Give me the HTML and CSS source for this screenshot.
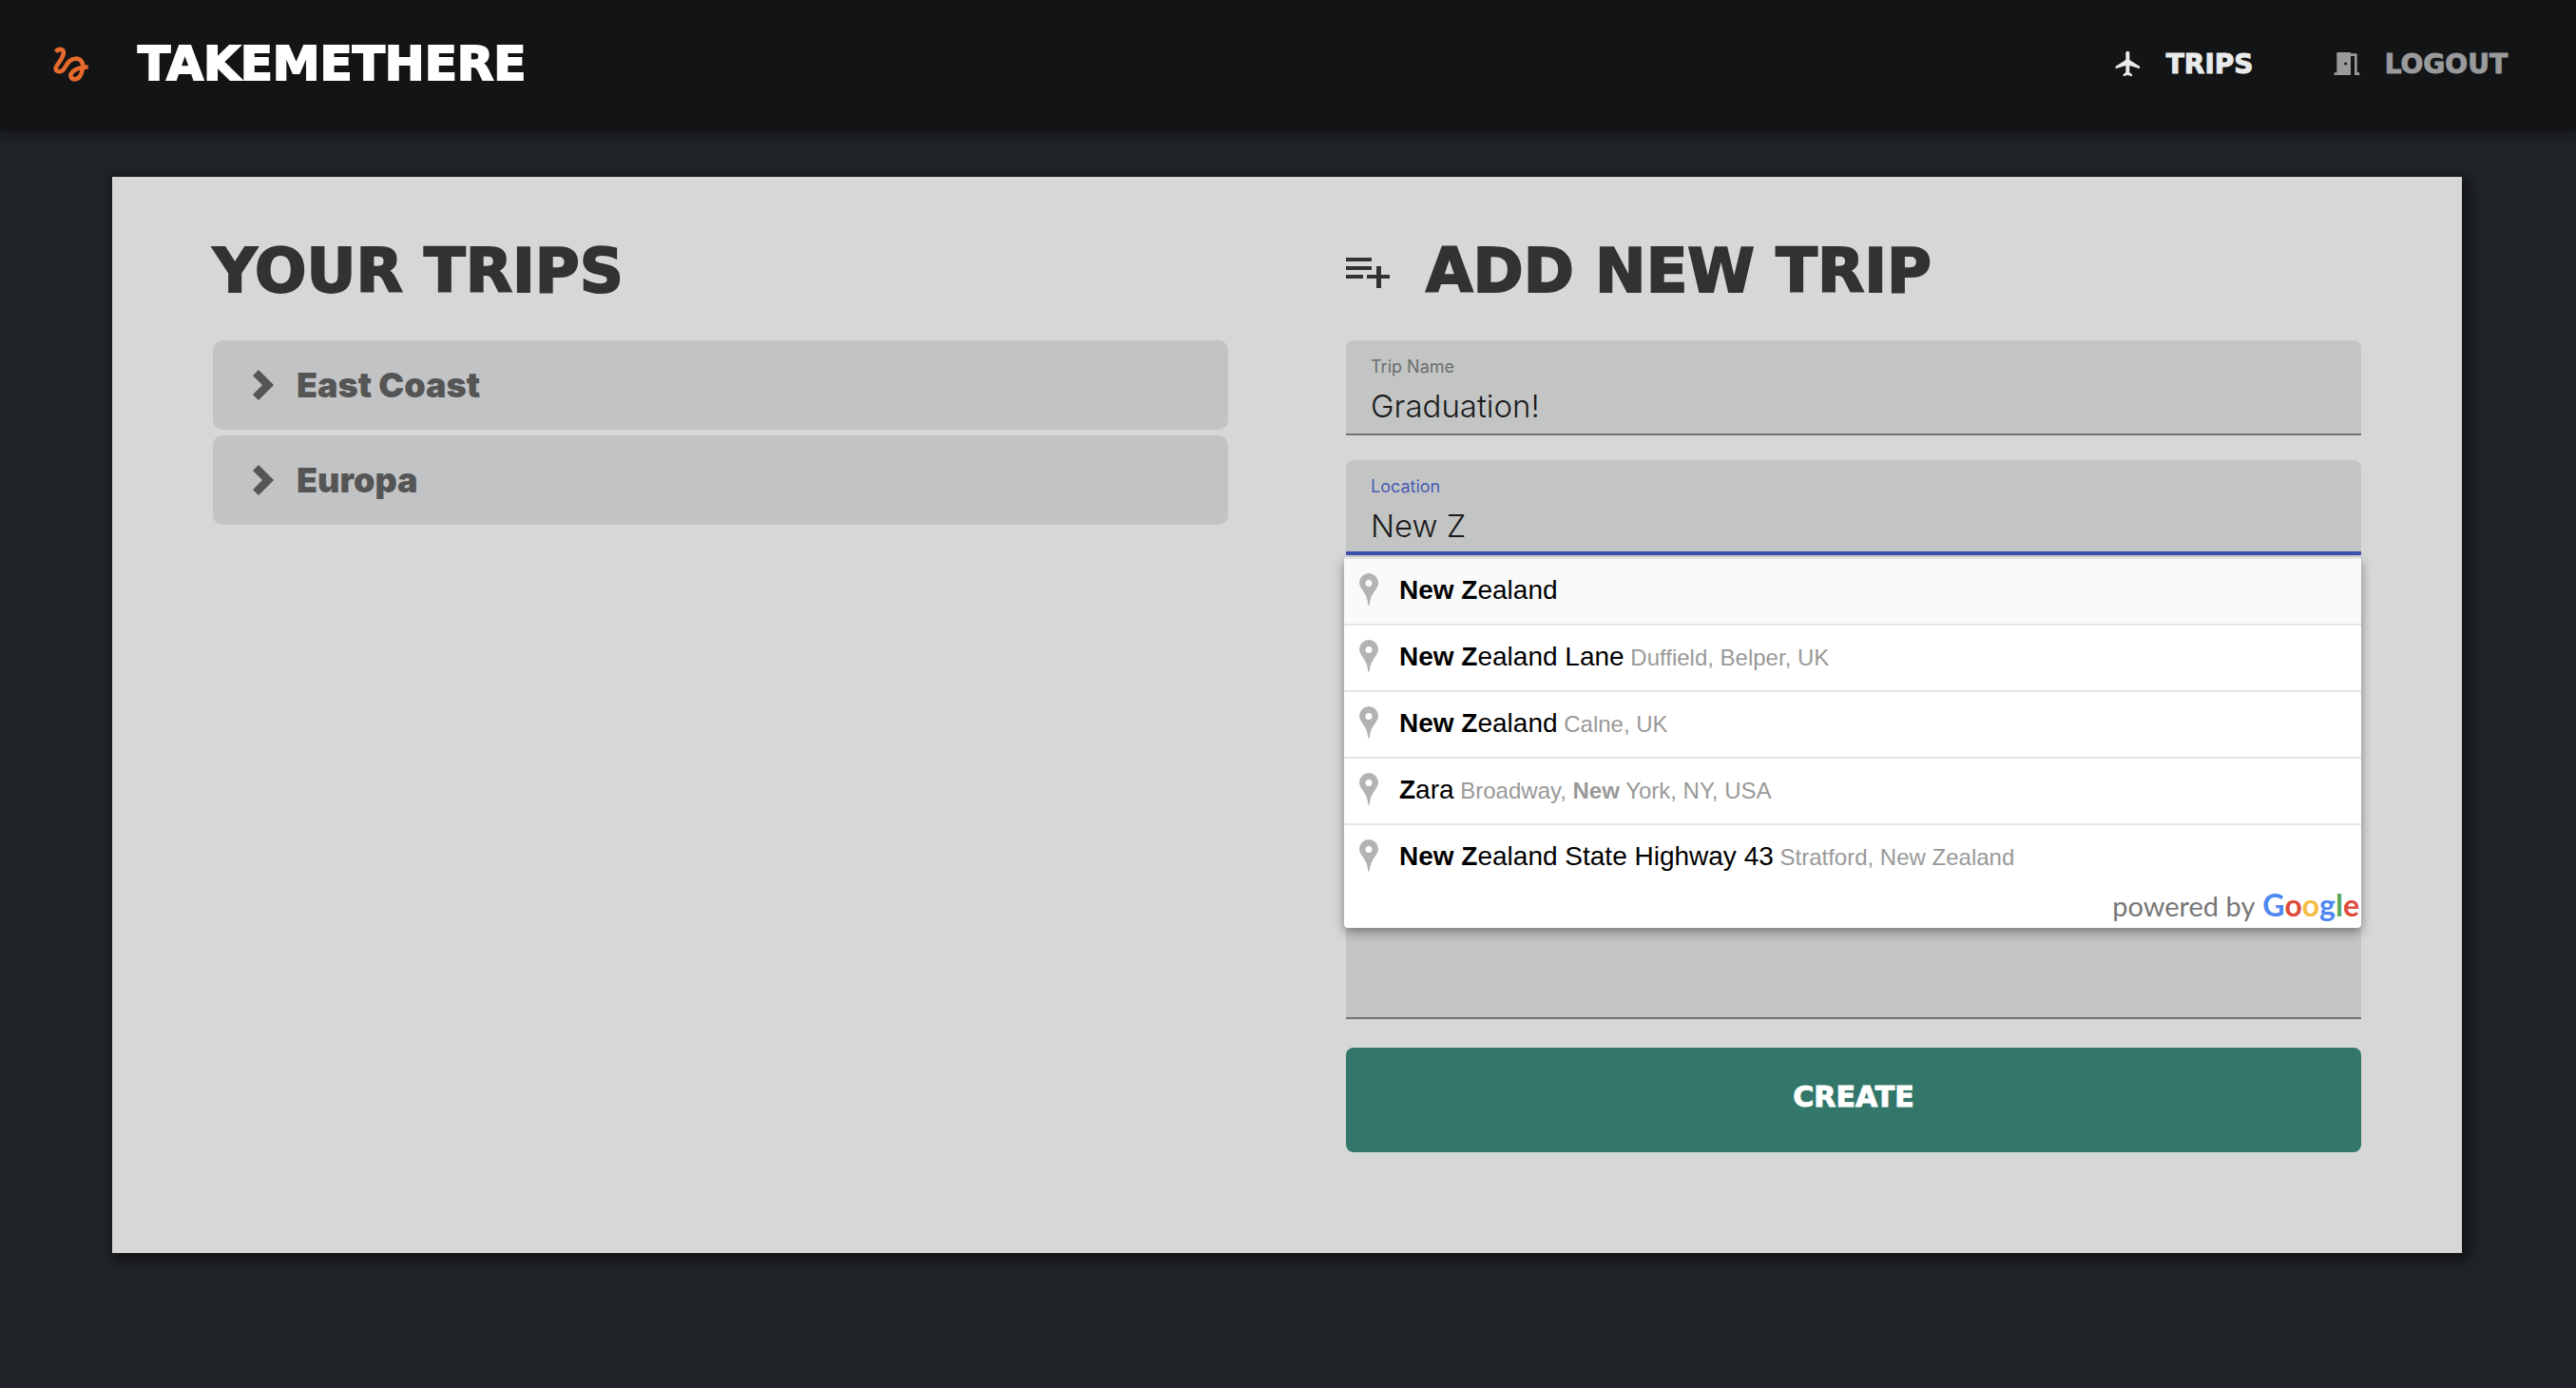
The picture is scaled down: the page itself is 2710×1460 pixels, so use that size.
FILE: index.html
```html
<!DOCTYPE html>
<html lang="en">
<head>
<meta charset="utf-8">
<title>TakeMeThere</title>
<link rel="stylesheet" href="styles.css">
</head>
<body>
<header class="topbar">
  <a class="brand" href="#">
    <svg class="brand-icon" viewBox="30 28 112 112" aria-hidden="true"><path d="M38 45C48 32 66 34 62 54C54 78 38 86 38 98C40 110 54 110 62 102C74 86 78 68 104 66C124 68 128 90 122 105C118 126 108 132 98 132C84 130 82 118 92 108C104 96 120 93 141 93" fill="none" stroke="#e66a2c" stroke-width="14"/></svg>
    <span>TAKEMETHERE</span>
  </a>
  <nav class="nav">
    <a class="nav-link is-active" href="#">
      <svg class="nav-icon" viewBox="0 0 24 24" aria-hidden="true"><path fill="currentColor" d="M21 16v-2l-8-5V3.500C13 2.670 12.330 2 11.500 2S10 2.670 10 3.500V9l-8 5v2l8-2.500V19l-2 1.500V22l3.500-1 3.500 1v-1.500L13 19v-5.500l8 2.500z"/></svg>
      <span class="nav-label">TRIPS</span>
    </a>
    <a class="nav-link" href="#">
      <svg class="nav-icon" viewBox="0 0 24 24" aria-hidden="true"><path fill="currentColor" fill-rule="evenodd" d="M4 3h11v1h5v15h2v2h-4V6h-3v15H2v-2h2zM10 11h2v2h-2z"/></svg>
      <span class="nav-label">LOGOUT</span>
    </a>
  </nav>
</header>
<main class="panel">
  <section class="column">
    <h1 class="title">YOUR TRIPS</h1>
    <div class="trip-list">
      <button class="trip" type="button"><svg class="chevron" viewBox="0 0 22 32" aria-hidden="true"><path fill="currentColor" d="M6 0l16 16L6 32l-6-6 10-10L0 6z"/></svg>East Coast</button>
      <button class="trip" type="button"><svg class="chevron" viewBox="0 0 22 32" aria-hidden="true"><path fill="currentColor" d="M6 0l16 16L6 32l-6-6 10-10L0 6z"/></svg>Europa</button>
    </div>
  </section>
  <section class="column">
    <h2 class="title">
      <svg class="title-icon" viewBox="0 0 46 32" aria-hidden="true"><path fill="currentColor" d="M0 0h27v4H0zM0 9h27v4H0zM0 18h18v4H0zM32 9h5v9h9v4h-9v10h-5V22H22v-4h10z"/></svg>
      <span>ADD NEW TRIP</span>
    </h2>
    <form class="form">
      <div class="field">
        <label for="trip-name">Trip Name</label>
        <input id="trip-name" type="text" value="Graduation!">
      </div>
      <div class="field is-focused">
        <label for="location">Location</label>
        <input id="location" type="text" value="New Z" autocomplete="off">
        <div class="suggestions">
          <ul class="options">
            <li class="option is-hovered"><svg class="pin" viewBox="0 0 20 34" aria-hidden="true"><path fill="#b3b3b3" fill-rule="evenodd" d="M10 0a10 10 0 0 1 10 10c0 5-5 9-7 14-2 4-2 10-3 10s-1-6-3-10C5 19 0 15 0 10A10 10 0 0 1 10 0zm0 7a3 3 0 1 0 0 7 3 3 0 0 0 0-7z"/></svg><div><span class="place"><b>New Z</b>ealand</span></div></li>
            <li class="option"><svg class="pin" viewBox="0 0 20 34" aria-hidden="true"><path fill="#b3b3b3" fill-rule="evenodd" d="M10 0a10 10 0 0 1 10 10c0 5-5 9-7 14-2 4-2 10-3 10s-1-6-3-10C5 19 0 15 0 10A10 10 0 0 1 10 0zm0 7a3 3 0 1 0 0 7 3 3 0 0 0 0-7z"/></svg><div><span class="place"><b>New Z</b>ealand Lane</span> <span class="area">Duffield, Belper, UK</span></div></li>
            <li class="option"><svg class="pin" viewBox="0 0 20 34" aria-hidden="true"><path fill="#b3b3b3" fill-rule="evenodd" d="M10 0a10 10 0 0 1 10 10c0 5-5 9-7 14-2 4-2 10-3 10s-1-6-3-10C5 19 0 15 0 10A10 10 0 0 1 10 0zm0 7a3 3 0 1 0 0 7 3 3 0 0 0 0-7z"/></svg><div><span class="place"><b>New Z</b>ealand</span> <span class="area">Calne, UK</span></div></li>
            <li class="option"><svg class="pin" viewBox="0 0 20 34" aria-hidden="true"><path fill="#b3b3b3" fill-rule="evenodd" d="M10 0a10 10 0 0 1 10 10c0 5-5 9-7 14-2 4-2 10-3 10s-1-6-3-10C5 19 0 15 0 10A10 10 0 0 1 10 0zm0 7a3 3 0 1 0 0 7 3 3 0 0 0 0-7z"/></svg><div><span class="place"><b>Z</b>ara</span> <span class="area">Broadway, <b>New</b> York, NY, USA</span></div></li>
            <li class="option"><svg class="pin" viewBox="0 0 20 34" aria-hidden="true"><path fill="#b3b3b3" fill-rule="evenodd" d="M10 0a10 10 0 0 1 10 10c0 5-5 9-7 14-2 4-2 10-3 10s-1-6-3-10C5 19 0 15 0 10A10 10 0 0 1 10 0zm0 7a3 3 0 1 0 0 7 3 3 0 0 0 0-7z"/></svg><div><span class="place"><b>New Z</b>ealand State Highway 43</span> <span class="area">Stratford, New Zealand</span></div></li>
          </ul>
          <div class="credit">powered by <span class="google"><span class="g-blue">G</span><span class="g-red">o</span><span class="g-yellow">o</span><span class="g-blue">g</span><span class="g-green">l</span><span class="g-red">e</span></span></div>
        </div>
      </div>
      <div class="field field-tall">
        <textarea aria-label="Description"></textarea>
      </div>
      <button class="create" type="submit">CREATE</button>
    </form>
  </section>
</main>
</body>
</html>
```
FILE: styles.css
```css
* { box-sizing: border-box; }

body {
  margin: 0;
  min-height: 100vh;
  background: #212429;
  font-family: Inter, "Open Sans", sans-serif;
}

button, input, textarea { font: inherit; border: 0; margin: 0; }

.topbar {
  display: flex;
  justify-content: space-between;
  align-items: center;
  height: 138px;
  padding: 0 72px 4px 56px;
  background: #131416;
  box-shadow: 0 4px 16px rgba(0, 0, 0, 0.5);
  font-family: "DejaVu Sans", sans-serif;
  font-weight: 700;
}

.brand, .nav, .nav-link { display: flex; align-items: center; }

.brand {
  gap: 52px;
  color: #fff;
  font-size: 50px;
  text-decoration: none;
  -webkit-text-stroke: 2px currentColor;
}

.brand-icon { width: 37px; height: 37px; }

.nav { gap: 60px; }

.nav-link {
  gap: 24px;
  color: #9a9a9c;
  font-size: 28px;
  text-decoration: none;
  -webkit-text-stroke: 1px currentColor;
}

.nav-link.is-active { color: #e9ebea; }

.nav-icon { width: 32px; height: 32px; stroke: none; }

.nav-label { min-width: 114px; }

.panel {
  display: grid;
  grid-template-columns: 1fr 1fr;
  gap: 124px;
  margin: 48px 120px 0 118px;
  padding: 64px 106px 106px;
  background: #d6d8d7;
  box-shadow: 4px 4px 16px 4px rgba(0, 0, 0, 0.5);
}

.title {
  display: flex;
  align-items: center;
  gap: 38px;
  height: 70px;
  margin: 0 0 38px;
  color: #323232;
  font: 700 64px "DejaVu Sans", sans-serif;
  -webkit-text-stroke: 2px currentColor;
}

.title-icon { width: 46px; height: 32px; margin-top: 4px; }

.trip-list { display: grid; gap: 6px; }

.trip {
  display: flex;
  align-items: center;
  gap: 24px;
  height: 94px;
  padding: 0 42px;
  border-radius: 10px;
  background: #c2c3c5;
  color: #555;
  font-size: 36px;
  font-weight: 900;
}

.chevron { width: 22px; height: 32px; }

.form { display: grid; }

.field {
  position: relative;
  display: flex;
  flex-direction: column;
  height: 100px;
  margin-bottom: 26px;
  padding: 16px 26px 0;
  border-bottom: 2px solid #717372;
  border-radius: 8px 8px 0 0;
  background: #c3c5c4;
}

.field label {
  color: #6b6d6c;
  font-size: 18px;
  line-height: 24px;
}

.field input {
  height: 48px;
  margin-top: 5px;
  padding: 0;
  background: none;
  color: #1a1b1b;
  font-size: 33px;
  font-weight: 300;
  outline: 0;
}

.field.is-focused { border-bottom: 4px solid #3f51b5; }

.is-focused label { color: #4a5ab5; }

.field-tall { height: 462px; margin-bottom: 30px; }

.field textarea {
  flex: 1;
  padding: 0;
  background: none;
  resize: none;
  outline: 0;
}

.suggestions {
  position: absolute;
  z-index: 1;
  top: 102px;
  left: -2px;
  right: 0;
  overflow: hidden;
  border-radius: 4px;
  background: #fff;
  box-shadow: 0 4px 12px rgba(0, 0, 0, 0.4);
  font-family: "Liberation Sans", Arial, sans-serif;
}

.options { margin: 0; padding: 0; list-style: none; }

.option {
  display: flex;
  align-items: flex-start;
  gap: 22px;
  height: 70px;
  padding-left: 16px;
  border-top: 2px solid #e6e6e6;
  color: #999;
  font-size: 24px;
  line-height: 66px;
}

.option.is-hovered { background: #fafafa; }

.pin { width: 20px; height: 34px; margin-top: 15px; }

.place { color: #000; font-size: 28px; }

.credit {
  display: flex;
  justify-content: flex-end;
  align-items: baseline;
  gap: 8px;
  height: 40px;
  padding-right: 2px;
  color: #777;
  font: 29px/32px Lato, sans-serif;
}

.google { font-size: 32px; font-weight: 700; }
.g-blue { color: #4e88f0; }
.g-red { color: #de4c3c; }
.g-yellow { color: #f6bd42; }
.g-green { color: #55a85a; }

.create {
  height: 110px;
  padding-bottom: 8px;
  border-radius: 8px;
  background: #33776a;
  color: #fff;
  font-family: "DejaVu Sans", sans-serif;
  font-size: 30px;
  font-weight: 700;
  -webkit-text-stroke: 1px currentColor;
}
```
